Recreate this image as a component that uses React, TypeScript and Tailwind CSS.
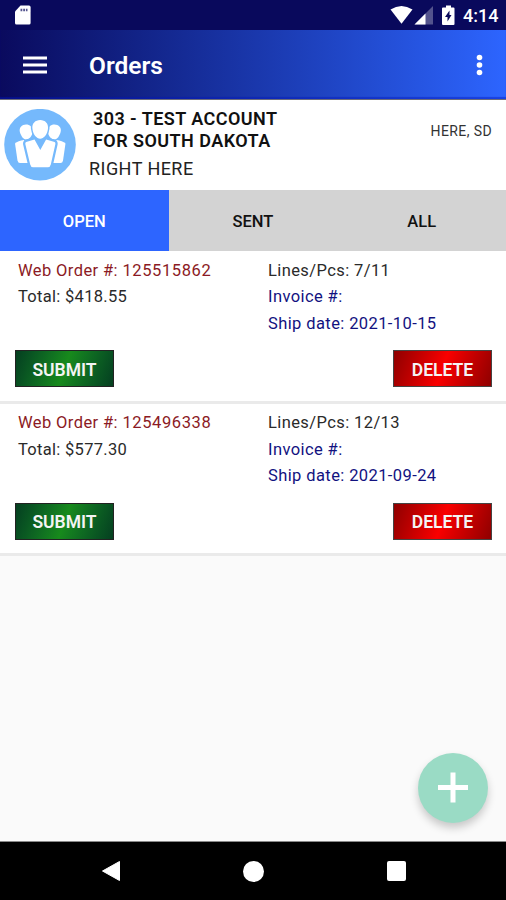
import type { ReactNode } from "react";

type Order = {
  webOrder: string;
  total: string;
  lines: string;
  shipDate: string;
};

const orders: Order[] = [
  {
    webOrder: "125515862",
    total: "$418.55",
    lines: "7/11",
    shipDate: "2021-10-15",
  },
  {
    webOrder: "125496338",
    total: "$577.30",
    lines: "12/13",
    shipDate: "2021-09-24",
  },
];

const StatusBar = () => (
  <div className="h-[30px] shrink-0 bg-[#09095c] flex items-center justify-between pl-[15px] pr-[9px] text-white">
    <svg width="16" height="20" viewBox="0 0 16 20">
      <path
        fill="#fff"
        d="M5.500 .5H14a1.600 1.600 0 0 1 1.600 1.600v15.900A1.600 1.600 0 0 1 14 19.600H1.600A1.600 1.600 0 0 1 0 18V6.500z"
      />
      <path fill="#55558f" d="M5.500 3.800h1.800v2.400H5.500zM8.200 3.800H10v2.400H8.200zM10.900 3.800h1.600v2.400h-1.600z" />
    </svg>
    <div className="flex items-center">
      <svg width="66" height="20" viewBox="0 0 66 20">
        <path fill="#fff" d="M11.500 18.800 0.500 4.600Q11.500-2.800 22.500 4.600z" />
        <path fill="#fff" fillOpacity=".3" d="M43 1v18.500H24.500z" />
        <path fill="#fff" d="M35.500 8.500v11H24.500z" />
        <path
          fill="#fff"
          fillRule="evenodd"
          d="M56 .5h5v2h2.500q1 0 1 1v15.500q0 1-1 1h-10.500q-1 0-1-1v-15.500q0-1 1-1h3zM59.500 5.500l-4.500 6.500h2.500v4.500l4-6.500h-2z"
        />
      </svg>
      <span className="ml-[7px] w-[34px] text-[18px] leading-[20px] font-medium whitespace-nowrap mt-0.5">
        4:14
      </span>
    </div>
  </div>
);

const Header = () => (
  <header className="h-[70px] shrink-0 bg-linear-to-r from-[#0a0a5e] to-[#2d65ff] border-b border-[#6d6d78] flex items-center px-[23px] text-white shadow-[inset_0_-2px_1px_rgba(0,20,190,0.45)]">
    <svg width="24" height="18" viewBox="0 0 24 18">
      <path fill="#fff" d="M0 .500h24v3H0zM0 7.500h24v3H0zM0 14.500h24v3H0z" />
    </svg>
    <h1 className="ml-[42px] mt-0.5 text-[24.5px] leading-[30px] font-semibold">
      Orders
    </h1>
    <svg className="ml-auto" width="8" height="22" viewBox="0 0 8 22">
      <circle cx="4.500" cy="3.500" r="2.800" fill="#fff" />
      <circle cx="4.500" cy="11" r="2.800" fill="#fff" />
      <circle cx="4.500" cy="18.500" r="2.800" fill="#fff" />
    </svg>
  </header>
);

const PeopleBadge = () => (
  <svg width="72" height="72" viewBox="0 0 72 72">
    <circle cx="36" cy="35.700" r="35.800" fill="#75b9fc" />
    <g fill="#fff">
      {/* people at the back */}
      <path d="M22 15.500c4 0 6.500 2.500 6.500 7S25 30.500 22 30.500s-5-4-6-7c-1.500-5 2-8 6-8z" />
      <path d="M50.500 15.500c-4 0-6.500 2.500-6.500 7s3.500 8 6.500 8 5-4 6-7c1.500-5-2-8-6-8z" />
      <path d="M11 34.500q3-3 9-3.500l10 23H16q-2 0-2.500-2.500z" />
      <path d="M61.500 34.500q-3-3-9-3.500l-10 23h14q2 0 2.500-2.500z" />
    </g>
    <g
      fill="#fff"
      stroke="#75b9fc"
      strokeWidth="4.500"
      strokeLinejoin="round"
      paintOrder="stroke"
    >
      <path d="M30.500 30.500l5.800 10.500 5.800-10.500 8.500 2.500q1 .5.800 2l-4.600 20.500q-.6 2.700-3 2.700H29.200q-2.400 0-3-2.700L21.300 35q-.2-1.500.8-2z" />
      <path
        strokeWidth="3"
        d="M36.200 11c5 0 8.300 3.500 7.800 8.500-.6 6-4.300 10.300-7.800 10.300s-7.200-4.300-7.800-10.300c-.5-5 2.800-8.500 7.800-8.500z"
      />
    </g>
  </svg>
);

const AccountCard = () => (
  <section className="h-[90px] shrink-0 bg-white flex pl-1 pr-[14px] pt-[9px] text-[#111]">
    <PeopleBadge />
    <div className="ml-[13px] -mt-px">
      <h2 className="pl-1 text-[18px] leading-[22px] font-semibold tracking-[0.45px] whitespace-nowrap">
        303 - TEST ACCOUNT
        <br />
        FOR SOUTH DAKOTA
      </h2>
      <p className="mt-[5px] text-[18px] leading-[24px] tracking-[0.45px] text-[#222]">
        RIGHT HERE
      </p>
    </div>
    <span className="ml-auto mt-[13px] text-[14px] leading-[18px] tracking-[0.4px] text-[#333]">
      HERE, SD
    </span>
  </section>
);

const Tabs = () => (
  <nav className="h-[61px] shrink-0 grid grid-cols-3 text-[16.5px] font-medium">
    <button className="bg-[#2d65ff] text-white pt-[3px]">OPEN</button>
    <button className="bg-[#d3d3d3] text-[#111] pt-[3px]">SENT</button>
    <button className="bg-[#d3d3d3] text-[#111] pt-[3px]">ALL</button>
  </nav>
);

const ActionButton = ({
  className,
  children,
}: {
  className: string;
  children: ReactNode;
}) => (
  <button
    className={`w-[99px] h-[37px] pt-[3px] border-[1.5px] text-[17.5px] leading-none font-semibold text-[#f4f4f4] ${className}`}
  >
    {children}
  </button>
);

const OrderRow = ({ order }: { order: Order }) => (
  <li className="h-[152.5px] bg-white border-b-[3px] border-[#eaeaea] pt-[6.700px] text-[16.5px] leading-[26.600px] tracking-[0.4px] text-[#2a2a2a]">
    <div className="grid grid-cols-[250px_1fr] pl-[18px] h-[92.800px]">
      <div>
        <p className="text-[#8b1a24]">
          Web Order #: <span className="tracking-[0.6px]">{order.webOrder}</span>
        </p>
        <p className="tracking-[0.3px]">Total: {order.total}</p>
      </div>
      <div>
        <p>Lines/Pcs: {order.lines}</p>
        <p className="text-[#12127f]">Invoice #:</p>
        <p className="text-[#12127f]">Ship date: {order.shipDate}</p>
      </div>
    </div>
    <div className="flex justify-between pl-[15px] pr-[14px] tracking-normal">
      <ActionButton className="border-[#222] bg-linear-110 from-[#053f20] via-[#178a1c] to-[#053f20]">
        SUBMIT
      </ActionButton>
      <ActionButton className="border-[#444] bg-linear-110 from-[#8f0000] via-[#fa0000] to-[#8f0000]">
        DELETE
      </ActionButton>
    </div>
  </li>
);

const NavBar = () => (
  <div className="h-[59px] shrink-0 bg-black border-t border-[#8a8a8a] flex items-center justify-between pl-[101px] pr-[100px]">
    <svg width="19" height="22" viewBox="0 0 19 22">
      <path
        d="M18.500 1.500v19L1.500 11z"
        fill="#fff"
        stroke="#fff"
        strokeLinejoin="round"
      />
    </svg>
    <div className="size-[21px] rounded-full bg-white" />
    <div className="size-[19.5px] rounded-[2px] bg-white" />
  </div>
);

const App = () => (
  <div className="relative w-[506px] h-[900px] overflow-hidden flex flex-col bg-[#fafafa] font-[Roboto,sans-serif]">
    <StatusBar />
    <Header />
    <AccountCard />
    <Tabs />
    <ul className="flex-1">
      {orders.map((order) => (
        <OrderRow key={order.webOrder} order={order} />
      ))}
    </ul>
    <NavBar />

    {/* Floating add button */}
    <button className="absolute right-[18px] bottom-[77px] size-[70px] rounded-full bg-[#9adbc5] shadow-[0_5px_9px_rgba(0,0,0,0.2)] flex items-center justify-center">
      <svg width="32" height="32" viewBox="0 0 32 32">
        <path d="M16 .5v30M1 15.500h30" stroke="#fff" strokeWidth="5" />
      </svg>
    </button>
  </div>
);

export default App;
